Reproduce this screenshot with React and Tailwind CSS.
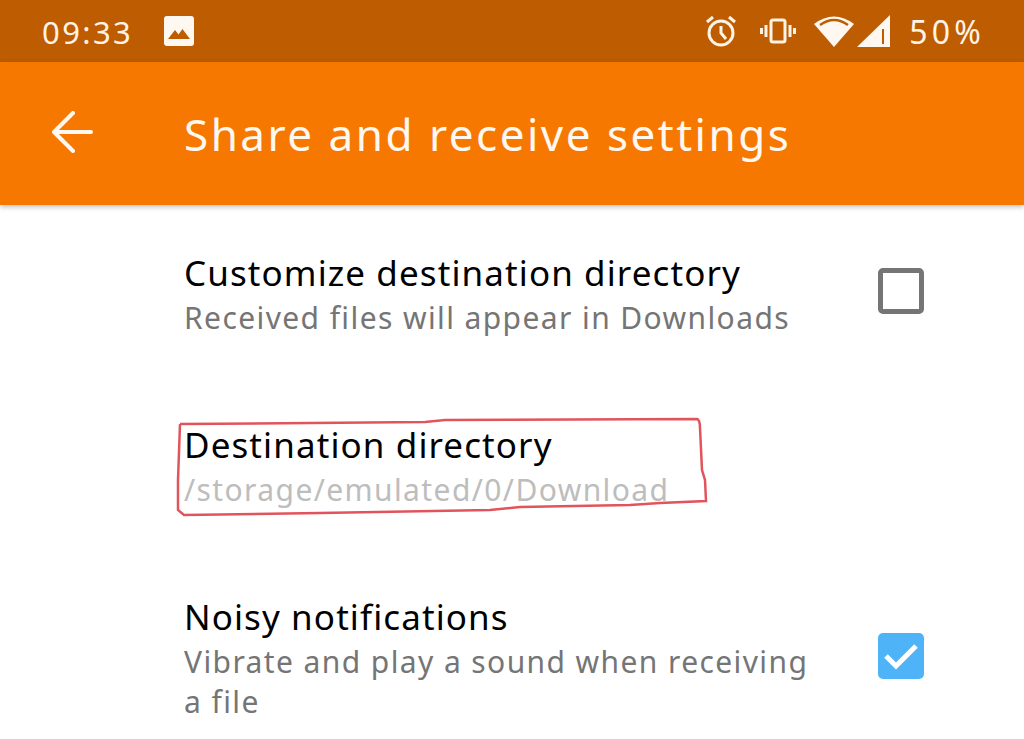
import React from "react";

const font = { fontFamily: '"Noto Sans", "Liberation Sans", sans-serif' };

function Row({ title, sub, subClass = "text-[#757575]", control, className }) {
  return (
    <div className={`flex items-start justify-between pl-[184px] pr-[100px] ${className}`}>
      <div className="flex flex-col w-[628px]">
        <div className="text-[35px] leading-[44px] text-black whitespace-nowrap tracking-[1.1px]">{title}</div>
        <div className={`text-[30px] leading-[40px] mt-[3px] tracking-[1.4px] ${subClass}`}>{sub}</div>
      </div>
      {control}
    </div>
  );
}

export default function App() {
  return (
    <div className="relative w-[1024px] h-[739px] overflow-hidden bg-white" style={font}>
      <div className="h-[62px] bg-[#bd5c00] flex items-center justify-between pl-[42px] pr-[39px] text-[#fff3e6]">
        <div className="flex items-center gap-[31px]">
          <span className="text-[31px] tracking-[2.4px] leading-none mt-[2px]">09:33</span>
          <svg width="30" height="30" viewBox="0 0 30 30">
            <rect width="30" height="30" rx="3" fill="#fff8f0" />
            <path d="M4 23 L11 14 L14.5 18.5 L18.5 13 L26 23 Z" fill="#bd5c00" />
          </svg>
        </div>
        <div className="flex items-center">
          <svg width="32" height="32" viewBox="0 0 32 32" fill="none" stroke="#fff3e6" strokeWidth="3" className="mr-[23px]">
            <circle cx="16" cy="18" r="12" />
            <path d="M16 11 V18 L21 24" />
            <path d="M2 7 L8 2 M30 7 L24 2" />
          </svg>
          <svg width="36" height="26" viewBox="0 0 36 26" fill="none" stroke="#fff3e6" strokeWidth="3" className="mr-[18px]">
            <rect x="11" y="2" width="14" height="22" rx="2" />
            <path d="M6 7 V19 M30 7 V19 M1.5 10 V16 M34.5 10 V16" />
          </svg>
          <svg width="40" height="32" viewBox="0 0 40 32" className="mr-[3px]">
            <path d="M0 9 Q20 -6 40 9 L20 32 Z" fill="#fff8f0" />
            <path d="M6 10 Q20 0 34 10" fill="none" stroke="#bd5c00" strokeWidth="2.5" />
          </svg>
          <svg width="33" height="32" viewBox="0 0 33 32" className="mr-[19px]">
            <path d="M0 32 L33 0 V32 Z" fill="#fff8f0" />
            <path d="M26 14 V29" stroke="#bd5c00" strokeWidth="2" />
          </svg>
          <span className="text-[32px] tracking-[4.2px] leading-none mt-[2px]">50%</span>
        </div>
      </div>

      <div className="h-[143px] bg-[#f77800] shadow-[0_2px_5px_rgba(0,0,0,0.25)] flex items-center pl-[52px] relative">
        <svg width="42" height="42" viewBox="0 0 42 42" fill="none" stroke="#fff8f0" strokeWidth="4" strokeLinecap="round" strokeLinejoin="round" className="mr-[90px] mb-[4px]">
          <path d="M39 21 H3 M21 2 L2 21 L21 40" />
        </svg>
        <span className="text-[44px] leading-none tracking-[2.5px] text-[#fff8f0] mt-[1px]">Share and receive settings</span>
      </div>

      <Row
        className="mt-[46px]"
        title="Customize destination directory"
        sub="Received files will appear in Downloads"
        subClass="text-[#757575] whitespace-nowrap"
        control={<div className="w-[46px] h-[46px] mt-[17px] rounded-[5px] border-[5px] border-[#757575]" />}
      />
      <Row
        className="mt-[85px]"
        title="Destination directory"
        sub="/storage/emulated/0/Download"
        subClass="text-[#bdbdbd] whitespace-nowrap"
      />
      <Row
        className="mt-[85px]"
        title="Noisy notifications"
        sub="Vibrate and play a sound when receiving a file"
        subClass="text-[#757575]"
        control={
          <div className="w-[46px] h-[46px] mt-[38px] rounded-[5px] bg-[#4fb4f7] flex items-center justify-center">
            <svg width="36" height="30" viewBox="0 0 36 30" fill="none" stroke="#fff" strokeWidth="5">
              <path d="M3 15 L13 25 L33 5" />
            </svg>
          </div>
        }
      />

      <svg className="absolute left-0 top-0 pointer-events-none" width="1024" height="739" fill="none" stroke="#e2545c" strokeWidth="2.5">
        <path d="M180 424 L425 422 L445 420 L697 419 Q700 420 700 428 L702 470 L705 480 L706 501 L660 503 L630 505 L520 507 L490 510 L320 513 L184 515 L178 510 L178 480 L180 424" />
      </svg>
    </div>
  );
}
